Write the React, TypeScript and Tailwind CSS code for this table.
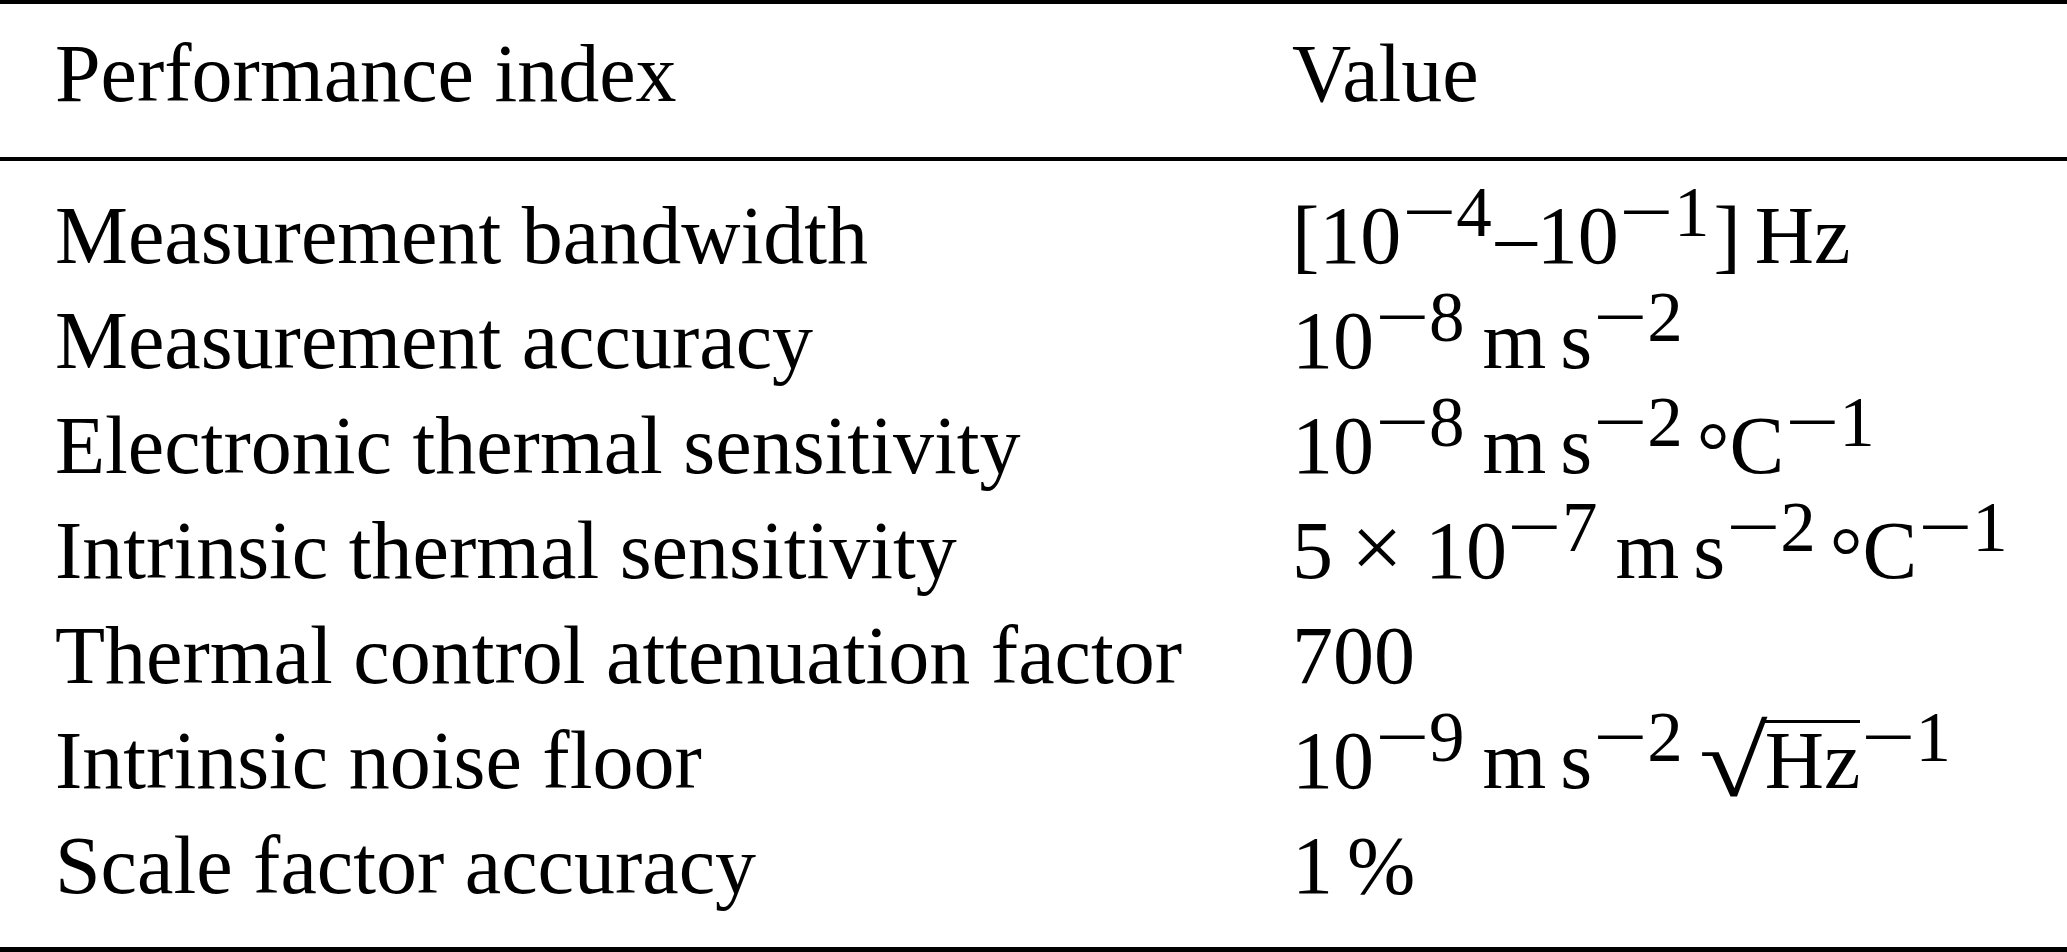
import type { ReactNode } from 'react'

// superscript in the table is roughly 0.86 of the body size
function Sup({ children }: { children: ReactNode }) {
  return <span className="text-[71px] leading-[0] align-[27px] mr-[4px]">{children}</span>
}

// TeX's minus is wider than the Times one, so stretch it
function Minus() {
  return <span className="inline-block leading-[0] scale-x-[1.35] mx-[7.5px]">−</span>
}

function Exp({ n }: { n: string }) {
  return (
    <Sup>
      <Minus />
      {n}
    </Sup>
  )
}

function Thin() {
  return <span className="inline-block w-[14px]" />
}

function Celsius() {
  return (
    <>
      <span className="inline-block leading-[0] ml-[10px] align-[-6px]">°</span>C<Exp n="1" />
    </>
  )
}

function MS2() {
  return (
    <>
      <Thin />m<Thin />s<Exp n="2" />
    </>
  )
}

const rows: { label: string; value: ReactNode }[] = [
  {
    label: 'Measurement bandwidth',
    value: (
      <>
        [10<Exp n="4" />–10<Exp n="1" />]<Thin />Hz
      </>
    ),
  },
  {
    label: 'Measurement accuracy',
    value: (
      <>
        10<Exp n="8" />
        <MS2 />
      </>
    ),
  },
  {
    label: 'Electronic thermal sensitivity',
    value: (
      <>
        10<Exp n="8" />
        <MS2 />
        <Celsius />
      </>
    ),
  },
  {
    label: 'Intrinsic thermal sensitivity',
    value: (
      <>
        5<span className="inline-block leading-[0] text-[92px] ml-[18px] mr-[22px]">×</span>10<Exp n="7" />
        <MS2 />
        <Celsius />
      </>
    ),
  },
  { label: 'Thermal control attenuation factor', value: '700' },
  {
    label: 'Intrinsic noise floor',
    value: (
      <>
        10<Exp n="9" />
        <MS2 />
        <span className="inline-block leading-[0] text-[100px] ml-[12px] mr-[11px] align-[-8px] origin-left scale-x-[1.25]">√</span>
        <span className="inline-block leading-[76px] border-t-[3px] border-black">Hz</span>
        <Exp n="1" />
      </>
    ),
  },
  {
    label: 'Scale factor accuracy',
    value: (
      <>
        1<Thin />%
      </>
    ),
  },
]

export default function App() {
  return (
    <div className="w-full h-[952px] overflow-hidden bg-white text-black font-['Liberation_Serif','Times_New_Roman',serif] text-[82px] whitespace-nowrap">
      <div className="h-[4px] bg-black" />

      <div className="pt-[17px] pb-[31px]">
        <div className="grid grid-cols-[1237px_1fr] pl-[55px] leading-[105px]">
          <div>Performance index</div>
          <div>Value</div>
        </div>
      </div>

      <div className="h-[4px] bg-black" />

      <div className="pt-[22px] pb-[29px]">
        {rows.map((row) => (
          <div key={row.label} className="grid grid-cols-[1237px_1fr] pl-[55px] h-[105px] leading-[105px]">
            <div>{row.label}</div>
            <div>{row.value}</div>
          </div>
        ))}
      </div>

      <div className="h-[5px] bg-black" />
    </div>
  )
}
